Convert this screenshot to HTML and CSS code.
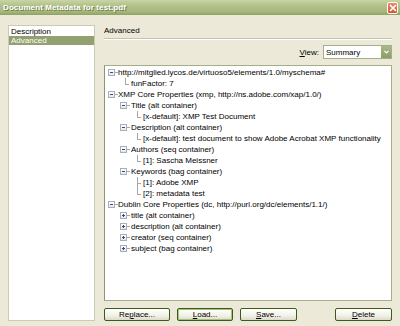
FILE: index.html
```html
<!DOCTYPE html>
<html>

<head>
  <meta charset="utf-8">
  <title>Document Metadata for test.pdf</title>
  <link rel="stylesheet" href="styles.css">
</head>

<body>
  <div class="window">
    <div class="titlebar">
      <span class="titlebar__text">Document Metadata for test.pdf</span>
      <span class="titlebar__close">
        <svg width="8" height="8" viewBox="0 0 8 8"><path d="M1 1L7 7M7 1L1 7" stroke="#fff" stroke-width="1.6"/></svg>
      </span>
    </div>

    <div class="main">
      <ul class="list">
        <li class="list__item">Description</li>
        <li class="list__item list__item--selected">Advanced</li>
      </ul>

      <div class="panel">
        <div class="panel__title">Advanced</div>
        <div class="panel__rule"></div>

        <div class="view">
          <span class="view__label"><u>V</u>iew:</span>
          <span class="select">
            <span class="select__value">Summary</span>
            <span class="select__button">
              <svg width="5" height="4" viewBox="0 0 5 4"><path d="M0.5 0.8L2.5 2.8L4.5 0.8" stroke="#fff" stroke-width="1.2" fill="none"/></svg>
            </span>
          </span>
        </div>

        <div class="tree">
          <div class="node lvl0"><span class="exp"></span>http://mitglied.lycos.de/virtuoso5/elements/1.0/myschema#</div>
          <div class="node lvl1 leaf last">funFactor: 7</div>
          <div class="node lvl0"><span class="exp"></span>XMP Core Properties (xmp, http://ns.adobe.com/xap/1.0/)</div>
          <div class="node lvl1"><span class="exp"></span>Title (alt container)</div>
          <div class="node lvl2 leaf last">[x-default]: XMP Test Document</div>
          <div class="node lvl1"><span class="exp"></span>Description (alt container)</div>
          <div class="node lvl2 leaf last">[x-default]: test document to show Adobe Acrobat XMP functionality</div>
          <div class="node lvl1"><span class="exp"></span>Authors (seq container)</div>
          <div class="node lvl2 leaf last">[1]: Sascha Meissner</div>
          <div class="node lvl1"><span class="exp"></span>Keywords (bag container)</div>
          <div class="node lvl2 leaf">[1]: Adobe XMP</div>
          <div class="node lvl2 leaf last">[2]: metadata test</div>
          <div class="node lvl0"><span class="exp"></span>Dublin Core Properties (dc, http://purl.org/dc/elements/1.1/)</div>
          <div class="node lvl1"><span class="exp exp--plus"></span>title (alt container)</div>
          <div class="node lvl1"><span class="exp exp--plus"></span>description (alt container)</div>
          <div class="node lvl1"><span class="exp exp--plus"></span>creator (seq container)</div>
          <div class="node lvl1"><span class="exp exp--plus"></span>subject (bag container)</div>
        </div>

        <div class="buttons">
          <button class="button button--replace">Re<u>p</u>lace...</button>
          <button class="button button--load button--default"><u>L</u>oad...</button>
          <button class="button button--save"><u>S</u>ave...</button>
          <button class="button button--delete"><u>D</u>elete</button>
        </div>
      </div>
    </div>
  </div>
</body>

</html>
```

FILE: styles.css
```css
:root {
  --color-bg: #ece9d8;
  --color-select: #93a070;
  --color-line: #a8a8a8;
  --color-text: #000;
}

html,
body {
  margin: 0;
  padding: 0;
}

body {
  width: 400px;
  height: 326px;
  overflow: hidden;
  background-color: var(--color-bg);
  font-family: 'Liberation Sans', Arial, sans-serif;
  font-size: 8px;
  color: var(--color-text);
}

.window {
  display: flex;
  flex-direction: column;
  height: 326px;
}

.titlebar {
  height: 15px;
  display: flex;
  align-items: center;
  justify-content: space-between;
  padding: 0 2px 0 3px;
  background: linear-gradient(#c9d4a5 0%, #b3c28a 35%, #a8b97e 75%, #8fa266 100%);
}

.titlebar__text {
  color: #fff;
  font-family: 'Liberation Sans', Arial, sans-serif;
  font-weight: 700;
  font-size: 8px;
  letter-spacing: 0.1px;
  text-shadow: 1px 1px 0 #6f7f4c;
}

.titlebar__close {
  width: 11px;
  height: 12px;
  display: flex;
  align-items: center;
  justify-content: center;
  background: linear-gradient(#e88a6c, #d5542f);
  border: 1px solid #fff;
  border-radius: 2px;
  box-sizing: border-box;
}

.main {
  flex: 1;
  display: flex;
  gap: 9px;
  padding: 10px 8px 5px 8px;
}

.list {
  width: 87px;
  margin: 0;
  padding: 1px 0 0 0;
  list-style: none;
  background: #fff;
  border: 1px solid #c9cbb3;
  box-sizing: border-box;
}

.list__item {
  height: 9px;
  line-height: 9px;
  padding-left: 2px;
}

.list__item--selected {
  background-color: var(--color-select);
  color: #fff;
}

.panel {
  flex: 1;
  display: flex;
  flex-direction: column;
}

.panel__title {
  height: 9px;
  line-height: 9px;
  margin-top: 1px;
}

.panel__rule {
  margin: 3px 0 0 0;
  border-top: 1px solid #c5c2b2;
  border-bottom: 1px solid #fff;
}

.view {
  display: flex;
  justify-content: flex-end;
  align-items: center;
  gap: 4px;
  margin-top: 5px;
}

.select {
  width: 69px;
  height: 14px;
  display: flex;
  align-items: center;
  justify-content: space-between;
  background: #fff;
  border: 1px solid #a5ad8a;
  box-sizing: border-box;
  padding: 0 0 0 2px;
}

.select__button {
  width: 10px;
  height: 12px;
  display: flex;
  align-items: center;
  justify-content: center;
  background: linear-gradient(#a9b98a, #8b9d66);
}

.tree {
  height: 236px;
  margin-top: 6px;
  background: #fff;
  border: 1px solid #a5ad8a;
  border-left-color: #8f9478;
  box-sizing: border-box;
  padding-top: 1px;
}

.node {
  position: relative;
  height: 11px;
  line-height: 11px;
  white-space: nowrap;
}

.lvl0 {
  padding-left: 13px;
}

.lvl1 {
  padding-left: 26px;
}

.lvl2 {
  padding-left: 38px;
}

/* expander box: minus by default, plus adds the vertical bar */
.exp {
  position: absolute;
  top: 2px;
  width: 7px;
  height: 7px;
  box-sizing: border-box;
  border: 1px solid #a4b0c0;
  background:
    linear-gradient(#3a4a80, #3a4a80) center / 3px 1px no-repeat,
    linear-gradient(#fff, #e8e8e0);
}

.exp--plus {
  background:
    linear-gradient(#3a4a80, #3a4a80) center / 3px 1px no-repeat,
    linear-gradient(#3a4a80, #3a4a80) center / 1px 3px no-repeat,
    linear-gradient(#fff, #e8e8e0);
}

.exp::after {
  content: '';
  position: absolute;
  left: 6px;
  top: 2px;
  width: 3px;
  border-top: 1px solid var(--color-line);
}

.lvl0 .exp {
  left: 3px;
}

.lvl1 .exp {
  left: 15px;
}

.leaf::before {
  content: '';
  position: absolute;
  top: 0;
  height: 11px;
  width: 4px;
  border-left: 1px solid var(--color-line);
}

.leaf::after {
  content: '';
  position: absolute;
  top: 6px;
  width: 4px;
  border-top: 1px solid var(--color-line);
}

.leaf.last::before {
  height: 6px;
}

.lvl1.leaf::before,
.lvl1.leaf::after {
  left: 20px;
}

.lvl2.leaf::before,
.lvl2.leaf::after {
  left: 32px;
}

.buttons {
  display: flex;
  gap: 7px;
  margin-top: 7px;
}

.button {
  height: 13px;
  padding: 0;
  font: inherit;
  font-size: 8px;
  line-height: 10px;
  color: #000;
  background: linear-gradient(#ffffff, #f2f1e8 60%, #dcdac8);
  border: 1px solid #3b5a1c;
  border-radius: 2px;
  cursor: pointer;
}

.button--replace {
  width: 66px;
}

.button--load {
  width: 56px;
}

.button--save {
  width: 57px;
}

.button--delete {
  width: 57px;
  margin-left: auto;
}

.button--default {
  box-shadow: inset 0 0 0 1px #a8c27c;
}
```
